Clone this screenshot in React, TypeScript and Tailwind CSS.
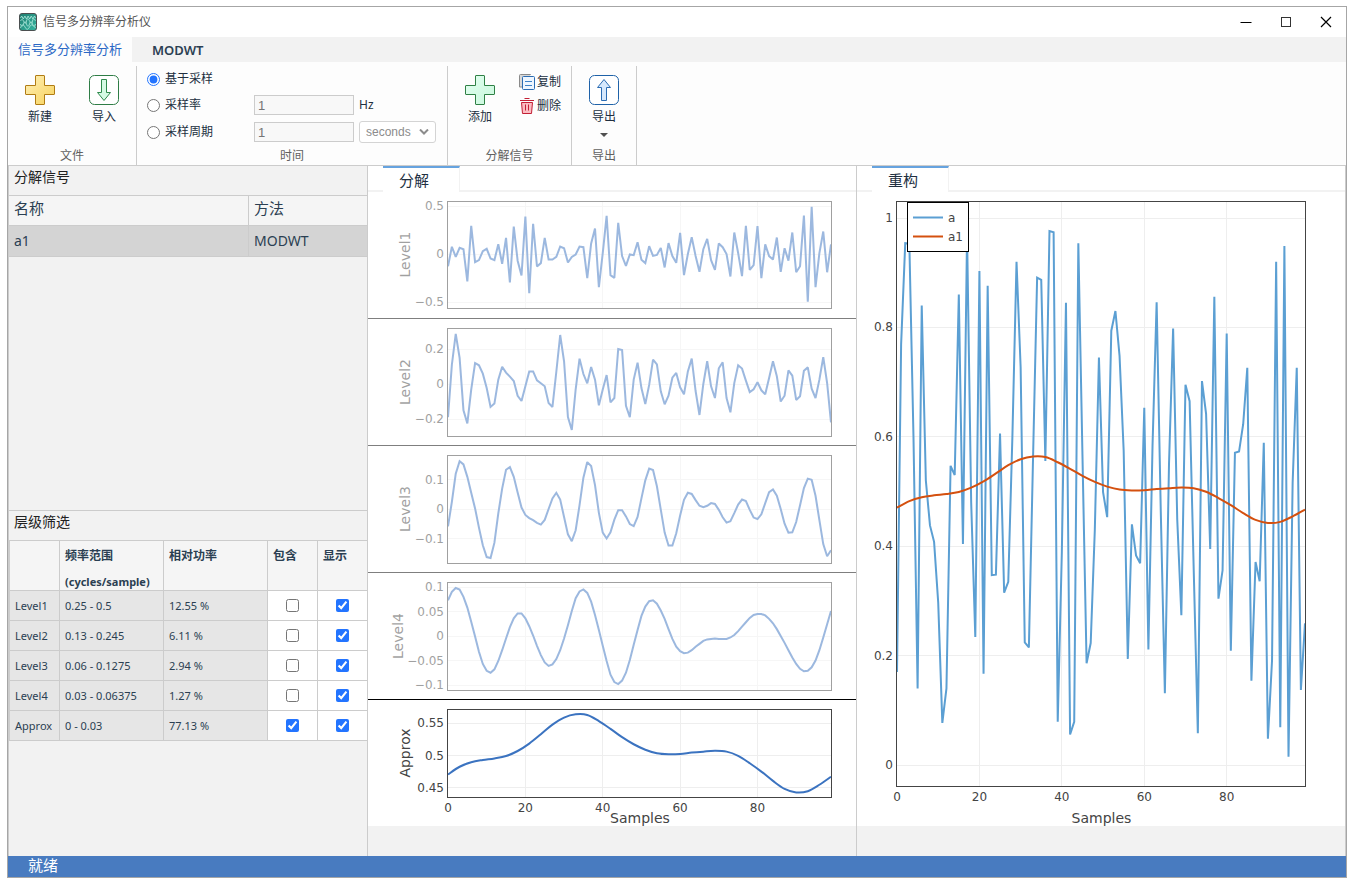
import { useState } from "react"
import type { ReactNode } from "react"
import clsx from "clsx"

// one entry per sample
const SIGNAL = [
  0.17, 0.769, 0.954, 0.953, 0.6, 0.14, 0.84, 0.52, 0.438, 0.408, 0.297, 0.077, 0.14, 0.547, 0.53, 0.86, 0.404, 0.97, 0.48, 0.234,
  0.903, 0.167, 0.876, 0.347, 0.348, 0.606, 0.315, 0.335, 0.6, 0.92, 0.727, 0.224, 0.215, 0.558, 0.891, 0.887, 0.556, 0.976, 0.974, 0.079,
  0.39, 0.845, 0.056, 0.079, 0.954, 0.567, 0.186, 0.223, 0.43, 0.745, 0.499, 0.453, 0.794, 0.83, 0.748, 0.575, 0.194, 0.44, 0.383, 0.369,
  0.653, 0.211, 0.583, 0.846, 0.465, 0.131, 0.55, 0.798, 0.449, 0.274, 0.695, 0.665, 0.356, 0.058, 0.702, 0.642, 0.395, 0.856, 0.304, 0.356,
  0.789, 0.209, 0.571, 0.573, 0.623, 0.726, 0.154, 0.371, 0.336, 0.589, 0.048, 0.191, 0.92, 0.069, 0.949, 0.015, 0.516, 0.726, 0.137, 0.259,
]

const LEVEL1 = [
  -0.127, 0.075, -0.03, 0.064, 0.05, -0.286, 0.293, -0.085, -0.064, 0.03, 0.054, -0.047, -0.064, 0.102, -0.102, 0.168, -0.297, 0.286, -0.07, -0.224,
  0.39, -0.408, 0.314, -0.13, -0.095, 0.168, -0.057, -0.057, -0.03, 0.078, 0.06, -0.089, -0.03, -0.005, 0.078, 0.071, -0.252, 0.11, 0.266, -0.346,
  0.01, 0.398, -0.22, -0.248, 0.325, -0.022, -0.123, -0.005, -0.012, 0.123, -0.06, -0.095, 0.082, -0.02, -0.01, 0.064, -0.14, 0.113, -0.022, -0.092,
  0.22, -0.22, 0, 0.175, -0.02, -0.186, 0.05, 0.158, -0.064, -0.165, 0.11, 0.071, 0, -0.234, 0.224, 0.01, -0.231, 0.293, -0.165, -0.116,
  0.29, -0.252, 0.1, -0.022, -0.057, 0.172, -0.186, 0.06, -0.07, 0.224, -0.19, -0.127, 0.4, -0.498, 0.491, -0.346, 0.01, 0.234, -0.19, 0.1,
]

const LEVEL2 = [
  -0.189, 0.11, 0.286, 0.149, -0.15, -0.225, -0.032, 0.12, 0.107, 0.059, -0.023, -0.131, -0.112, 0.025, 0.099, 0.065, 0.042, 0.017, -0.067, -0.097,
  -0.013, 0.072, 0.072, 0.021, 0.004, -0.013, -0.109, -0.131, 0.07, 0.28, 0.13, -0.189, -0.263, -0.03, 0.145, 0.057, 0.004, 0.097, 0.025, -0.122,
  -0.032, 0.051, -0.105, -0.08, 0.2, 0.194, -0.124, -0.19, 0.025, 0.122, -0.023, -0.114, -0.005, 0.139, 0.112, -0.042, -0.116, -0.067, 0.036, 0.063,
  -0.019, -0.059, 0.072, 0.145, -0.04, -0.177, 0, 0.13, -0.013, -0.08, 0.09, 0.124, -0.08, -0.162, 0.005, 0.107, 0.088, 0.019, -0.046, -0.03,
  0.01, -0.036, -0.059, 0.034, 0.13, 0.044, -0.1, -0.067, 0.078, 0.048, -0.091, -0.07, 0.076, 0.095, -0.027, -0.08, 0.025, 0.154, 0.005, -0.219,
]

const LEVEL3 = [
  -0.059, 0.024, 0.12, 0.162, 0.151, 0.109, 0.055, 0.002, -0.063, -0.123, -0.163, -0.166, -0.114, -0.015, 0.069, 0.133, 0.142, 0.109, 0.056, 0.005,
  -0.02, -0.031, -0.038, -0.047, -0.053, -0.037, 0, 0.036, 0.055, 0.032, -0.027, -0.086, -0.109, -0.072, 0.013, 0.106, 0.159, 0.146, 0.081, -0.013,
  -0.08, -0.1, -0.079, -0.036, -0.004, -0.004, -0.025, -0.051, -0.058, -0.027, 0.036, 0.097, 0.137, 0.132, 0.077, -0.002, -0.08, -0.124, -0.124, -0.082,
  -0.022, 0.031, 0.055, 0.051, 0.03, 0.011, 0.006, 0.011, 0.02, 0.017, -0.003, -0.028, -0.046, -0.041, -0.014, 0.015, 0.032, 0.027, -0.003, -0.029,
  -0.034, -0.018, 0.02, 0.057, 0.066, 0.045, 0, -0.05, -0.08, -0.079, -0.044, 0.013, 0.071, 0.103, 0.099, 0.045, -0.038, -0.119, -0.16, -0.14,
]

const LEVEL4 = [
  0.073, 0.09, 0.098, 0.095, 0.08, 0.058, 0.029, -0.001, -0.032, -0.057, -0.071, -0.075, -0.068, -0.051, -0.029, -0.005, 0.018, 0.036, 0.046, 0.046,
  0.036, 0.02, 0.001, -0.02, -0.039, -0.054, -0.061, -0.058, -0.047, -0.029, -0.005, 0.022, 0.051, 0.077, 0.091, 0.095, 0.088, 0.07, 0.043, 0.012,
  -0.02, -0.051, -0.079, -0.094, -0.098, -0.091, -0.075, -0.049, -0.018, 0.012, 0.041, 0.06, 0.071, 0.073, 0.066, 0.052, 0.035, 0.014, -0.006, -0.022,
  -0.031, -0.035, -0.034, -0.029, -0.022, -0.016, -0.01, -0.007, -0.006, -0.005, -0.006, -0.006, -0.006, -0.003, 0.002, 0.01, 0.019, 0.028, 0.037, 0.043,
  0.045, 0.045, 0.042, 0.035, 0.026, 0.014, 0, -0.014, -0.029, -0.044, -0.057, -0.067, -0.072, -0.071, -0.064, -0.05, -0.029, -0.003, 0.024, 0.051,
]

// every third sample, drawn as a smooth curve
const APPROX = [
  0.4705, 0.4825, 0.4895, 0.493, 0.4955, 0.4992, 0.507, 0.5185, 0.533, 0.548, 0.559, 0.564, 0.563, 0.5535, 0.5415, 0.5285, 0.5175,
  0.509, 0.5035, 0.502, 0.5025, 0.5045, 0.506, 0.5072, 0.506, 0.4995, 0.488, 0.475, 0.4605, 0.448, 0.4425, 0.4445, 0.4545, 0.467,
]

type Point = [number, number]

function linePath(points: Point[]) {
  return "M" + points.map(([x, y]) => `${x.toFixed(2)},${y.toFixed(2)}`).join("L")
}

function smoothPath(points: Point[]) {
  let d = `M${points[0][0]},${points[0][1]}`
  for (let i = 0; i < points.length - 1; i++) {
    const p0 = points[Math.max(i - 1, 0)]
    const p1 = points[i]
    const p2 = points[i + 1]
    const p3 = points[Math.min(i + 2, points.length - 1)]
    const c = [p1[0] + (p2[0] - p0[0]) / 6, p1[1] + (p2[1] - p0[1]) / 6, p2[0] - (p3[0] - p1[0]) / 6, p2[1] - (p3[1] - p1[1]) / 6]
    d += `C${c.map((v) => v.toFixed(2)).join(",")},${p2[0].toFixed(2)},${p2[1].toFixed(2)}`
  }
  return d
}

type Series = { values: number[]; color: string; step?: number }

type PlotProps = {
  height: number
  left: number
  right: number
  bottom: number
  base: number
  scale: number
  origin?: number
  ticks: number[]
  series: Series[]
  title?: string
  titleX?: number
  xLabelY?: number
  xTitleY?: number
  muted?: boolean
  children?: ReactNode
}

const PLOT_WIDTH = 488
const PLOT_TOP = 9

// base is the y of the value `origin`, scale is pixels per unit
function Plot({ height, left, right, bottom, base, scale, origin = 0, ticks, series, title, titleX = 42, xLabelY, xTitleY, muted, children }: PlotProps) {
  const px = (i: number) => left + 1 + (i * (right - left - 1)) / 99
  const py = (v: number) => base - (v - origin) * scale
  const middle = (PLOT_TOP + bottom) / 2

  return (
    <svg
      viewBox={`0 0 ${PLOT_WIDTH} ${height}`}
      className={clsx("block w-full font-['DejaVu_Sans',sans-serif]", muted && "opacity-50")}
      fill="#444"
      fontSize="12"
    >
      <g stroke="#eee" shapeRendering="crispEdges">
        {[20, 40, 60, 80].map((t) => (
          <line key={t} x1={Math.floor(px(t)) + 0.5} x2={Math.floor(px(t)) + 0.5} y1={PLOT_TOP} y2={bottom} />
        ))}
        {ticks.map((t) => (
          <line key={t} x1={left} x2={right} y1={Math.floor(py(t)) + 0.5} y2={Math.floor(py(t)) + 0.5} />
        ))}
      </g>
      {series.map((s) => {
        const step = s.step ?? 1
        const points = s.values.map((v, i): Point => [px(i * step), py(v)])
        return (
          <path key={s.color} d={step > 1 ? smoothPath(points) : linePath(points)} fill="none" stroke={s.color} strokeWidth="2" strokeMiterlimit="2" />
        )
      })}
      <rect x={left + 0.5} y={PLOT_TOP + 0.5} width={right - left} height={bottom - PLOT_TOP} fill="none" stroke="#444" />
      {ticks.map((t) => (
        <text key={t} x={left - 3} y={py(t) + 4} textAnchor="end">
          {String(t).replace("-", "−")}
        </text>
      ))}
      {xLabelY &&
        [0, 20, 40, 60, 80].map((t) => (
          <text key={t} x={px(t)} y={xLabelY} textAnchor="middle">
            {t}
          </text>
        ))}
      {xTitleY && (
        <text x={(left + right) / 2 + 1} y={xTitleY} fontSize="14" textAnchor="middle">
          Samples
        </text>
      )}
      {title && (
        <text transform={`translate(${titleX} ${middle}) rotate(-90)`} fontSize="14" textAnchor="middle">
          {title}
        </text>
      )}
      {children}
    </svg>
  )
}

const LINE = "#3b73c0"

function Decomposition() {
  const frame = { height: 126, left: 79, right: 463 }
  return (
    <div className="bg-white">
      <div className="border-b border-[#7f7f7f]">
        <Plot {...frame} muted bottom={116} base={62} scale={96} ticks={[0.5, 0, -0.5]} title="Level1" series={[{ values: LEVEL1, color: LINE }]} />
      </div>
      <div className="border-b border-[#7f7f7f]">
        <Plot {...frame} muted bottom={117} base={65} scale={175} ticks={[0.2, 0, -0.2]} title="Level2" series={[{ values: LEVEL2, color: LINE }]} />
      </div>
      <div className="border-b border-[#7f7f7f]">
        <Plot {...frame} muted bottom={117} base={63} scale={295} ticks={[0.1, 0, -0.1]} title="Level3" series={[{ values: LEVEL3, color: LINE }]} />
      </div>
      <div className="border-b border-black">
        <Plot {...frame} muted bottom={117} base={63} scale={490} ticks={[0.1, 0.05, 0, -0.05, -0.1]} title="Level4" titleX={35} series={[{ values: LEVEL4, color: LINE }]} />
      </div>
      <Plot
        {...frame}
        bottom={97}
        base={55.5}
        origin={0.5}
        scale={643}
        ticks={[0.55, 0.5, 0.45]}
        title="Approx"
        xLabelY={112}
        xTitleY={123}
        series={[{ values: APPROX, color: LINE, step: 3 }]}
      />
    </div>
  )
}

function Reconstruction() {
  return (
    <div className="bg-white">
      <Plot
        height={634}
        left={39}
        right={448}
        bottom={594}
        base={573}
        scale={547}
        ticks={[1, 0.8, 0.6, 0.4, 0.2, 0]}
        xLabelY={609}
        xTitleY={631}
        series={[
          { values: SIGNAL, color: "#5b9fd3" },
          { values: APPROX, color: "#d4500f", step: 3 },
        ]}
      >
        <rect x="50.5" y="10.5" width="61" height="49" fill="#fff" stroke="#000" />
        <line x1="56" x2="86" y1="25.5" y2="25.5" stroke="#5b9fd3" strokeWidth="2" />
        <line x1="56" x2="86" y1="44.5" y2="44.5" stroke="#d4500f" strokeWidth="2" />
        <text x="91" y="30">a</text>
        <text x="91" y="49">a1</text>
      </Plot>
    </div>
  )
}

function Logo() {
  return (
    <svg viewBox="0 0 18 18" className="size-[18px]">
      <defs>
        <linearGradient id="logo" x1="0" y1="0" x2="1" y2="1">
          <stop offset="0" stopColor="#1f7d70" />
          <stop offset="1" stopColor="#35b5a0" />
        </linearGradient>
      </defs>
      <rect x="0.5" y="0.5" width="17" height="17" rx="2.5" fill="url(#logo)" stroke="#4b4f50" />
      <g fill="none" stroke="#a6e3d7" strokeWidth="0.9">
        <path d="M1.5 5l1.200-2 1.600 3 1.600-3 1.600 3L9.100 3l1.600 3 1.600-3 1.600 3 1.600-3 1 2" />
        <path d="M1.500 8c1-2 2-2 3 0s2 4 3 0 2-2 3 0 2 4 3 0 2-2 3 0" />
        <path d="M1.500 11c1 3 2 3 3 0s2-3 3 0 2 3 3 0 2-3 3 0 2 3 3 0" />
        <path d="M1.500 15c1.500-4 3-4 4.500-1s3 3 4.500 0 3-3 6 1" />
      </g>
    </svg>
  )
}

function PlusIcon({ fill, light, stroke }: { fill: string; light: string; stroke: string }) {
  const id = `plus-${stroke.slice(1)}`
  return (
    <svg viewBox="0 0 30 30" className="size-[30px]">
      <defs>
        <linearGradient id={id} x1="0" y1="0" x2="1" y2="1">
          <stop offset="0" stopColor={light} />
          <stop offset="1" stopColor={fill} />
        </linearGradient>
      </defs>
      <path
        d="M11 .5h8a.5.5 0 0 1 .5.5v9.500H29a.5.5 0 0 1 .5.5v8a.5.5 0 0 1-.5.5h-9.500V29a.5.5 0 0 1-.5.5h-8a.5.5 0 0 1-.5-.5v-9.500H1a.5.5 0 0 1-.5-.5v-8a.5.5 0 0 1 .5-.5h9.500V1a.5.5 0 0 1 .5-.5z"
        fill={`url(#${id})`}
        stroke={stroke}
      />
    </svg>
  )
}

function ImportIcon() {
  return (
    <svg viewBox="0 0 30 30" className="size-[30px]">
      <rect x="0.500" y="0.500" width="29" height="29" rx="5" fill="#fff" stroke="#2f7d46" />
      <path d="M12.500 4.500h5V17.500h4L15 25.500 8.500 17.500h4z" fill="#d5fbe4" stroke="#2f8a4c" />
    </svg>
  )
}

function ExportIcon() {
  return (
    <svg viewBox="0 0 30 30" className="size-[30px]">
      <rect x="0.500" y="0.500" width="29" height="29" rx="5" fill="#fff" stroke="#1f62a8" />
      <path d="M12.500 25.500h5V12.500h4L15 4.500 8.500 12.500h4z" fill="#d5e8fd" stroke="#2b6cb3" />
    </svg>
  )
}

function CopyIcon() {
  return (
    <svg viewBox="0 0 16 16" className="size-4" fill="none">
      <path d="M11.500 1V.5H1.500a1 1 0 0 0-1 1v11.500H3" fill="#d9d9d9" stroke="#8a8a8a" />
      <rect x="3.500" y="2.500" width="12" height="13" rx="1" fill="#eef6ff" stroke="#2b6cb3" />
      <path d="M6 7.500h7M6 11.500h7" stroke="#3f83c8" />
    </svg>
  )
}

function TrashIcon() {
  return (
    <svg viewBox="0 0 16 16" className="size-4" fill="none" stroke="#c31f35">
      <path d="M5.500.5h5M1 2.500h14" />
      <path d="M2.500 4.500h11l-1 11h-9z" fill="#fbbcc2" />
      <path d="M6.500 6.500v6M9.500 6.500v6" />
    </svg>
  )
}

function RibbonGroup({ label, className, children }: { label: string; className?: string; children: ReactNode }) {
  return (
    <section className={clsx("flex shrink-0 flex-col border-r border-[#ccc]", className)}>
      <div className="flex flex-1">{children}</div>
      <p className="h-[18px] text-center text-xs leading-[18px] text-[#616161]">{label}</p>
    </section>
  )
}

function RibbonButton({ label, icon, menu }: { label: string; icon: ReactNode; menu?: boolean }) {
  return (
    <button type="button" className="flex w-16 flex-col items-center pt-[9px] text-xs leading-4 text-[#212f3f]">
      {icon}
      <span className="mt-1">{label}</span>
      {menu && (
        <svg viewBox="0 0 8 4" className="mt-2 h-1 w-2" fill="#505050">
          <path d="M0 0h8L4 4z" />
        </svg>
      )}
    </button>
  )
}

function Ribbon() {
  const [mode, setMode] = useState("samples")
  const radio = (value: string, label: string) => (
    <label className="flex w-[107px] items-center gap-[5px]">
      <input type="radio" name="time" className="size-[13px] accent-[#2374ff]" checked={mode === value} onChange={() => setMode(value)} />
      {label}
    </label>
  )
  const field = "h-5 w-[100px] border border-[#ccc] bg-[#f8f8f8] px-[3px] font-['Liberation_Sans',sans-serif] text-[13px] text-[#757575]"

  return (
    <div className="flex h-[104px] border-b border-[#ccc] bg-[#fdfdfd] pt-1">
      <RibbonGroup label="文件" className="w-[129px]">
        <RibbonButton label="新建" icon={<PlusIcon light="#fff0b8" fill="#f7d25c" stroke="#b07c14" />} />
        <RibbonButton label="导入" icon={<ImportIcon />} />
      </RibbonGroup>
      <RibbonGroup label="时间" className="w-[311px]">
        <div className="pl-[10px] text-xs text-[#212f3f]">
          <div className="flex h-[26px] items-center">{radio("samples", "基于采样")}</div>
          <div className="flex h-[26px] items-center">
            {radio("rate", "采样率")}
            <input aria-label="采样率" className={field} defaultValue="1" disabled />
            <span className="pl-[5px]">Hz</span>
          </div>
          <div className="flex h-7 items-center">
            {radio("period", "采样周期")}
            <input aria-label="采样周期" className={field} defaultValue="1" disabled />
            <div className="relative ml-[5px]">
              <select
                aria-label="单位"
                disabled
                className="block h-[22px] w-[77px] appearance-none rounded-[3px] border border-[#d4d4d4] bg-white pl-1.5 font-['Liberation_Sans',sans-serif] text-xs text-[#8c8c8c] opacity-100"
              >
                <option>seconds</option>
              </select>
              <svg viewBox="0 0 10 6" className="absolute top-2 right-[7px] h-1.5 w-2.5" fill="none" stroke="#8c8c8c" strokeWidth="2">
                <path d="M1 0.500l4 4 4-4" />
              </svg>
            </div>
          </div>
        </div>
      </RibbonGroup>
      <RibbonGroup label="分解信号" className="w-[124px]">
        <RibbonButton label="添加" icon={<PlusIcon light="#e2fff0" fill="#c9f7dc" stroke="#2f8045" />} />
        <div className="flex flex-col pt-1 pl-[7px] text-xs text-[#212f3f]">
          <button type="button" className="flex h-6 items-center gap-0.5">
            <CopyIcon />
            复制
          </button>
          <button type="button" className="flex h-6 items-center gap-0.5">
            <TrashIcon />
            删除
          </button>
        </div>
      </RibbonGroup>
      <RibbonGroup label="导出" className="w-[65px]">
        <RibbonButton label="导出" icon={<ExportIcon />} menu />
      </RibbonGroup>
    </div>
  )
}

const levels = [
  { name: "Level1", range: "0.25 - 0.5", power: "12.55 %", include: false, show: true },
  { name: "Level2", range: "0.13 - 0.245", power: "6.11 %", include: false, show: true },
  { name: "Level3", range: "0.06 - 0.1275", power: "2.94 %", include: false, show: true },
  { name: "Level4", range: "0.03 - 0.06375", power: "1.27 %", include: false, show: true },
  { name: "Approx", range: "0 - 0.03", power: "77.13 %", include: true, show: true },
]

function SignalTable() {
  return (
    <table className="w-full table-fixed border-separate border-spacing-0 text-left text-[#2b3f52]">
      <thead className="text-[15px] leading-6">
        <tr className="h-[30px] bg-[#f5f5f5]">
          <th className="w-[240px] border-r border-b border-[#ccc] p-0 pl-[5px] align-top font-normal">名称</th>
          <th className="border-b border-[#ccc] p-0 pl-[5px] align-top font-normal">方法</th>
        </tr>
      </thead>
      <tbody className="text-sm">
        <tr className="h-[31px] bg-[#d4d4d4]">
          <td className="border-r border-b border-[#ccc] p-0 pl-[5px]">a1</td>
          <td className="border-b border-[#ccc] p-0 pl-[5px]">MODWT</td>
        </tr>
      </tbody>
    </table>
  )
}

function LevelTable() {
  const head = "border-r border-b border-[#ccc] p-0 pt-0.5 pl-[5px] align-top font-bold"
  const cell = "border-r border-b border-[#ccc] bg-[#e6e6e6] p-0 pl-[5px]"
  return (
    <table className="w-full table-fixed border-separate border-spacing-0 text-left text-[#2b3f52]">
      <thead>
        <tr className="h-[50px] bg-[#f5f5f5] text-xs leading-[25px]">
          <th className={clsx(head, "w-[51px] border-l")} />
          <th className={clsx(head, "w-[104px]")}>
            <span className="block">频率范围</span>
            <span className="block pt-1.5 text-[11px] leading-4">(cycles/sample)</span>
          </th>
          <th className={clsx(head, "w-[104px]")}>相对功率</th>
          <th className={clsx(head, "w-[50px]")}>包含</th>
          <th className="border-b border-[#ccc] p-0 pt-0.5 pl-[5px] align-top font-bold">显示</th>
        </tr>
      </thead>
      <tbody className="text-[11px] leading-4">
        {levels.map((l) => (
          <tr key={l.name} className="h-[30px]">
            <td className={clsx(cell, "border-l")}>{l.name}</td>
            <td className={cell}>{l.range}</td>
            <td className={cell}>{l.power}</td>
            <td className="border-r border-b border-[#ccc] bg-white p-0">
              <input type="checkbox" aria-label={`${l.name} 包含`} defaultChecked={l.include} className="mx-auto block size-[13px] accent-[#2374ff]" />
            </td>
            <td className="border-b border-[#ccc] bg-white p-0">
              <input type="checkbox" aria-label={`${l.name} 显示`} defaultChecked={l.show} className="mx-auto block size-[13px] accent-[#2374ff]" />
            </td>
          </tr>
        ))}
      </tbody>
    </table>
  )
}

function PlotPane({ title, children }: { title: string; children: ReactNode }) {
  return (
    <section className="min-w-0 border-r border-[#ccc]">
      <div className="flex h-[26px] bg-white">
        <div className="w-[15px] border-b-2 border-[#f2f2f2]" />
        <h2 className="border-t-2 border-r border-[#f2f2f2] border-t-[#66a3df] pr-[30px] pl-4 text-[15px] leading-6 text-[#212f3f]">{title}</h2>
        <div className="flex-1 border-b-2 border-[#f2f2f2]" />
      </div>
      {children}
    </section>
  )
}

export default function App() {
  return (
    <div className="flex min-h-screen flex-col bg-white px-[7px] pt-1.5 pb-[5px] font-['Noto_Sans','Noto_Sans_CJK_SC',sans-serif]">
      <div className="flex flex-1 flex-col border border-[#a6a6a6]">
        <header className="flex h-[30px] items-center pl-[11px]">
          <Logo />
          <h1 className="flex-1 pl-1.5 text-xs text-[#555]">信号多分辨率分析仪</h1>
          <button type="button" aria-label="最小化" className="flex h-full w-10 items-center justify-center">
            <svg viewBox="0 0 12 12" className="size-3" stroke="#000">
              <path d="M0.500 6.500h11" />
            </svg>
          </button>
          <button type="button" aria-label="最大化" className="flex h-full w-10 items-center justify-center">
            <svg viewBox="0 0 12 12" className="size-3" fill="none" stroke="#333">
              <rect x="1.500" y="1.500" width="9" height="9" />
            </svg>
          </button>
          <button type="button" aria-label="关闭" className="flex h-full w-10 items-center justify-center">
            <svg viewBox="0 0 12 12" className="size-3" stroke="#000" strokeWidth="1.200">
              <path d="M1 1l10 10M11 1L1 11" />
            </svg>
          </button>
        </header>

        <nav className="flex h-[25px] bg-[#f2f2f2] text-[13px] leading-5">
          <button type="button" className="bg-[#fdfdfd] px-[10px] pb-0.5 text-[#2b68c5]">
            信号多分辨率分析
          </button>
          <button type="button" className="px-5 font-semibold text-[#2b3f52]">
            MODWT
          </button>
        </nav>

        <Ribbon />

        <main className="grid flex-1 grid-cols-[360px_1fr_1fr] bg-[#f2f2f2]">
          <aside className="grid grid-rows-2 border-x border-[#ccc]">
            <section className="border-b border-[#ccc]">
              <h2 className="h-[30px] border-b border-[#ccc] pl-[5px] text-sm leading-[22px] text-[#212121]">分解信号</h2>
              <SignalTable />
            </section>
            <section>
              <h2 className="h-[30px] border-b border-[#ccc] pl-[5px] text-sm leading-[22px] text-[#212121]">层级筛选</h2>
              <LevelTable />
            </section>
          </aside>
          <PlotPane title="分解">
            <Decomposition />
          </PlotPane>
          <PlotPane title="重构">
            <Reconstruction />
          </PlotPane>
        </main>

        <footer className="h-[21px] bg-[#487bc0] pl-5 text-[15px] leading-[18px] text-white">就绪</footer>
      </div>
    </div>
  )
}
